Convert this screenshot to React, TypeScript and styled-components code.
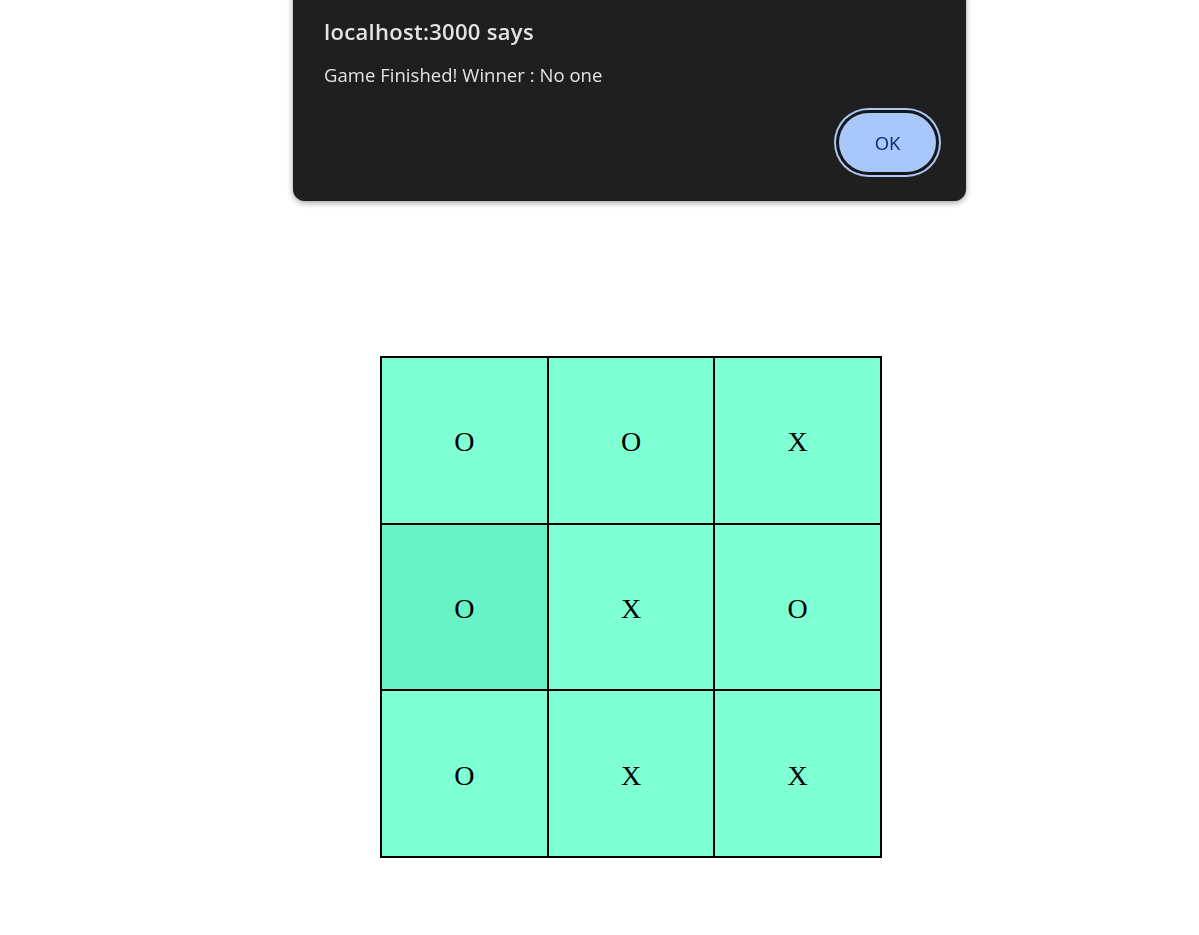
import styled, { createGlobalStyle } from "styled-components";

const board = ["O", "O", "X", "O", "X", "O", "O", "X", "X"];
const hovered = 3;

export default function App() {
  return (
    <>
      <GlobalStyle />
      <Page>
        <Board>
          {board.map((mark, i) => (
            <Cell key={i} active={i === hovered}>
              {mark}
            </Cell>
          ))}
        </Board>
      </Page>
      <Dialog>
        <Title>localhost:3000 says</Title>
        <Message>Game Finished! Winner : No one</Message>
        <Actions>
          <OkButton>OK</OkButton>
        </Actions>
      </Dialog>
    </>
  );
}

const GlobalStyle = createGlobalStyle`
  html, body {
    margin: 0;
    background: #ffffff;
  }
  * {
    box-sizing: border-box;
  }
`;

const Page = styled.main`
  min-height: 935px;
  padding: 356px 0 0 380px;
`;

const Board = styled.div`
  width: 502px;
  display: grid;
  grid-template-columns: repeat(3, 1fr);
  border: 1px solid #000;
`;

const Cell = styled.div<{ active?: boolean }>`
  height: 166.67px;
  display: flex;
  align-items: center;
  justify-content: center;
  padding-top: 4px;
  border: 1px solid #000;
  background: ${(p) => (p.active ? "#67f3c5" : "#7fffd4")};
  font-family: "Liberation Serif", "Times New Roman", serif;
  font-size: 28px;
  color: #000;
`;

const Dialog = styled.div`
  position: fixed;
  top: -14px;
  left: 293px;
  width: 673px;
  height: 215px;
  padding: 30px 30px 0 31px;
  background: #1f1f1f;
  border-radius: 12px;
  box-shadow: 0 2px 6px rgba(0, 0, 0, 0.35), 0 0 1px rgba(0, 0, 0, 0.4);
  font-family: "Open Sans", "Noto Sans", sans-serif;
  color: #e3e3e3;
`;

const Title = styled.div`
  font-size: 22px;
  font-weight: 600;
  line-height: 30px;
  letter-spacing: 0.3px;
`;

const Message = styled.div`
  margin-top: 16px;
  font-size: 18.5px;
  line-height: 26px;
  letter-spacing: 0.03px;
`;

const Actions = styled.div`
  display: flex;
  justify-content: flex-end;
  margin-top: 25px;
`;

const OkButton = styled.button`
  width: 97px;
  height: 59px;
  border: none;
  border-radius: 999px;
  background: #a8c7fa;
  color: #062e6f;
  font-family: "Open Sans", "Noto Sans", sans-serif;
  font-size: 18.5px;
  font-weight: 500;
  box-shadow: 0 0 0 3px #161616, 0 0 0 5px #a8c7fa;
`;
